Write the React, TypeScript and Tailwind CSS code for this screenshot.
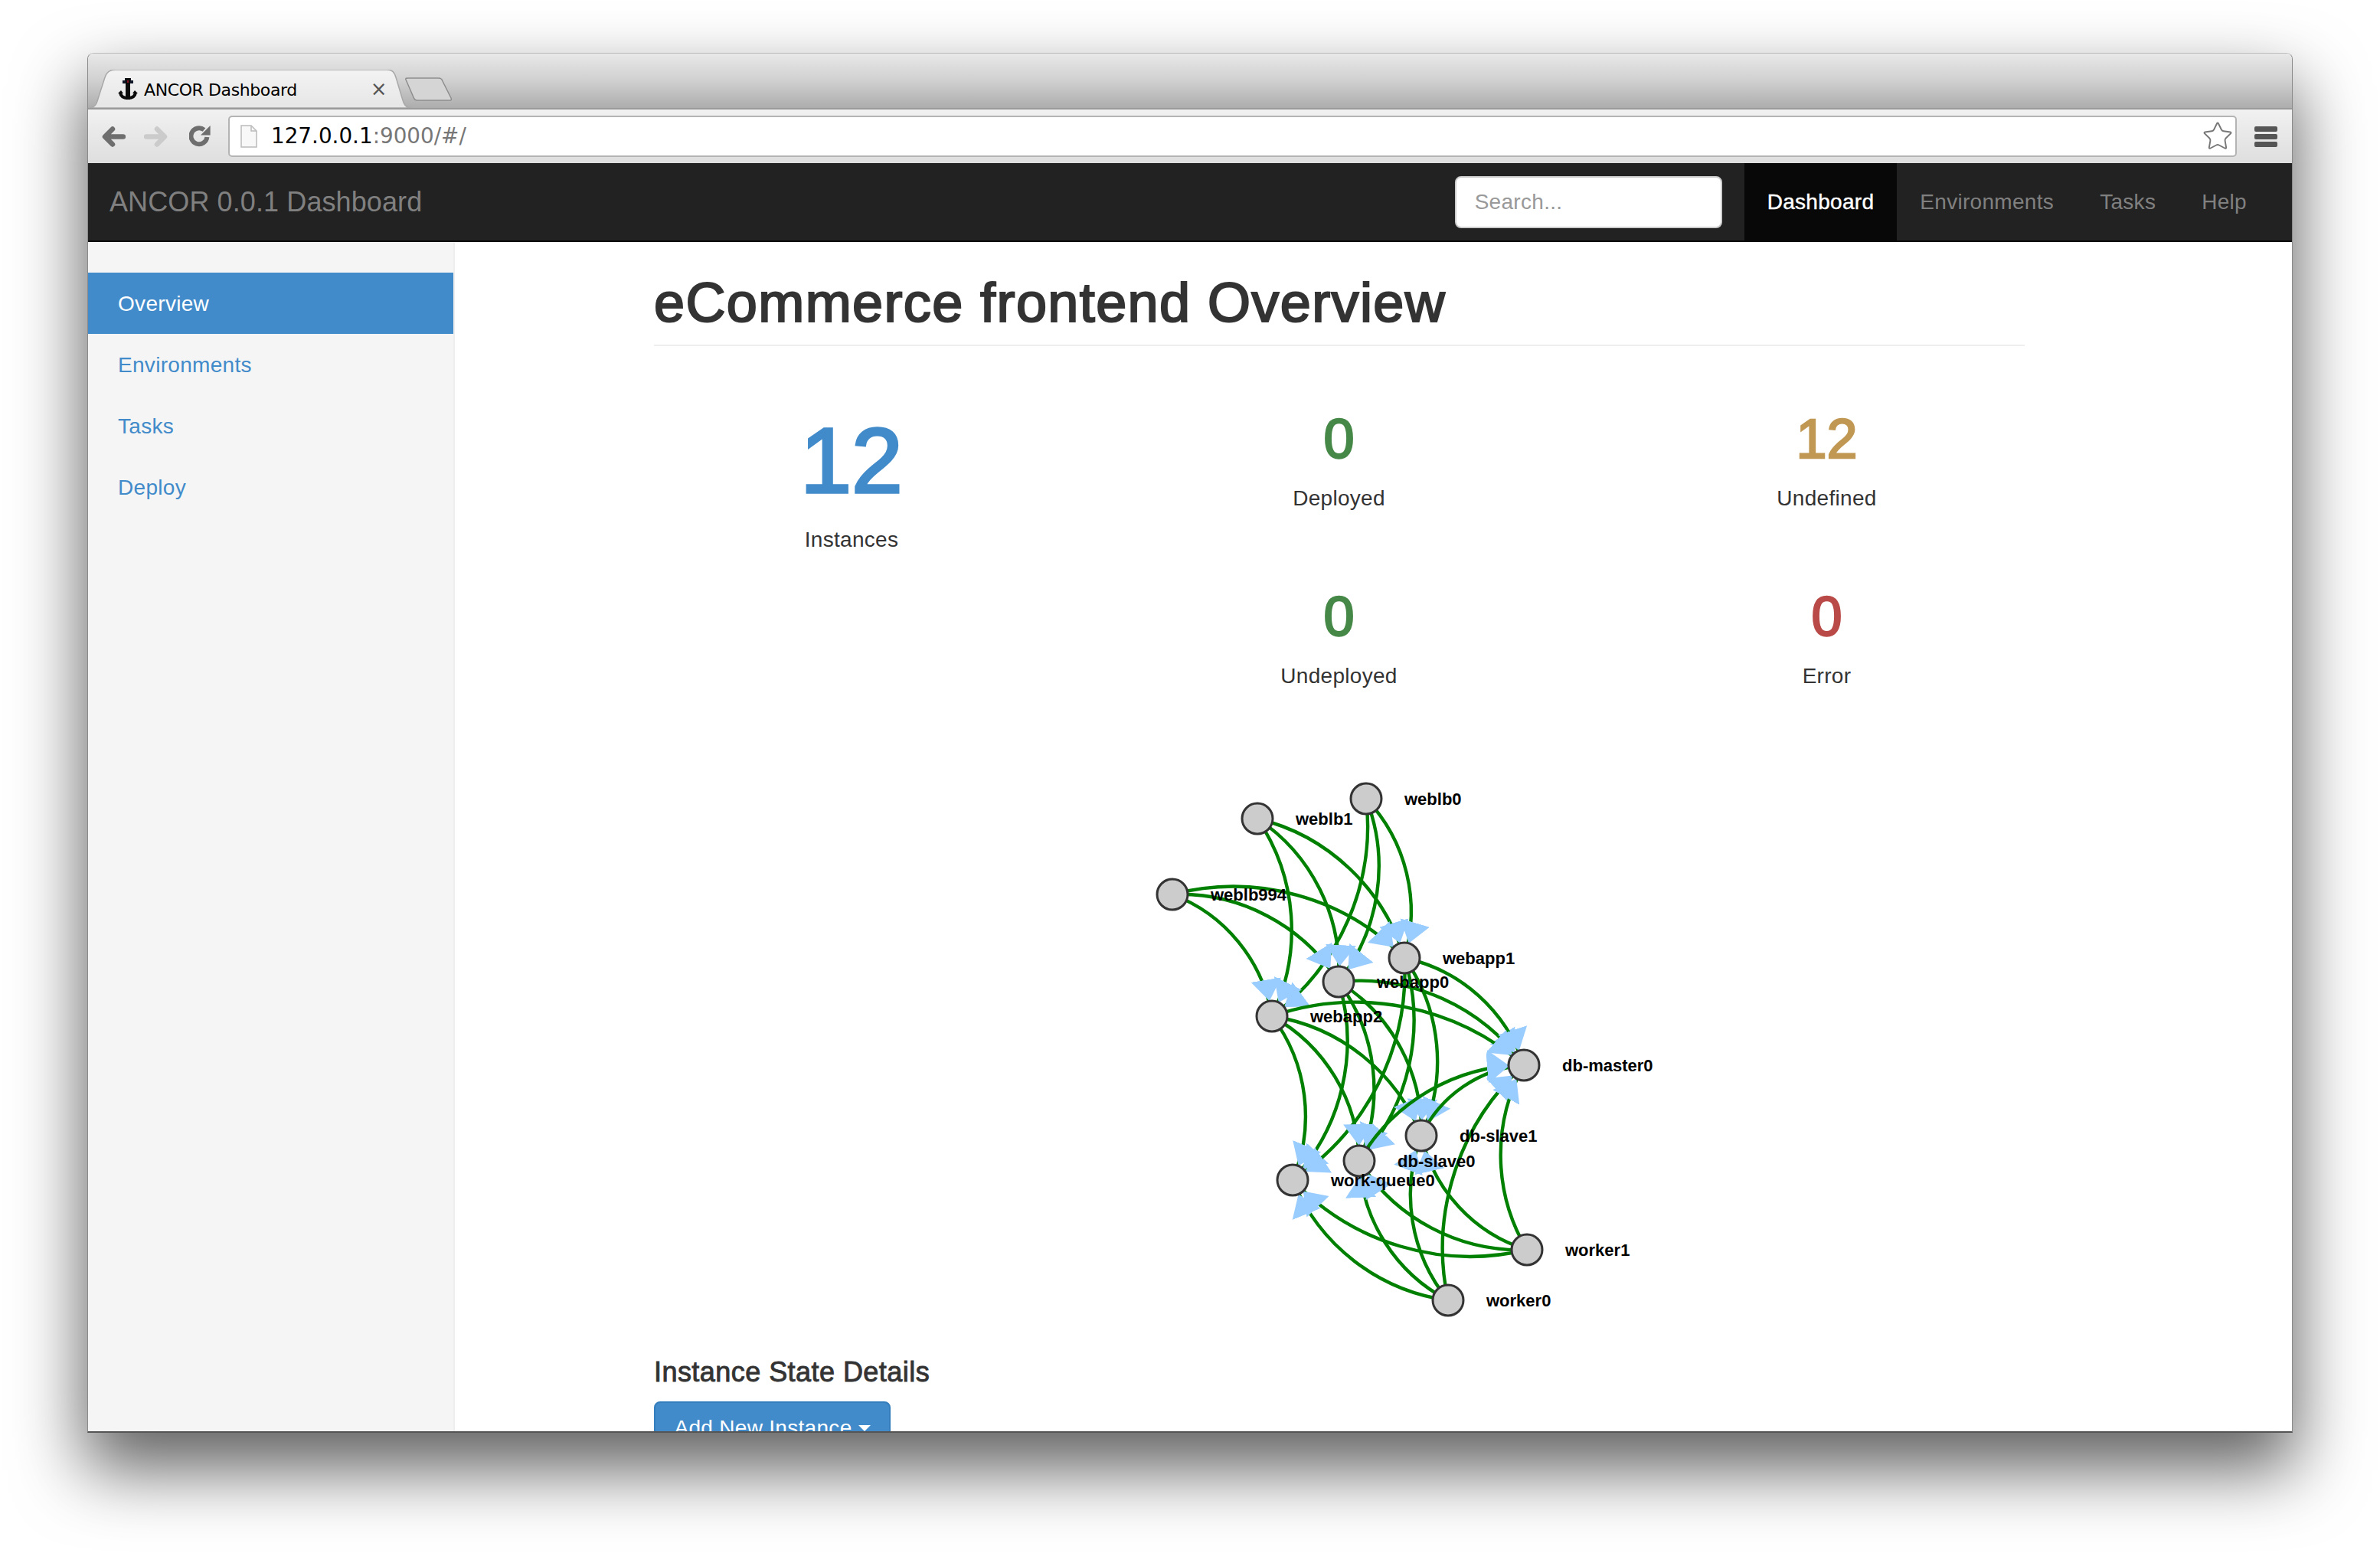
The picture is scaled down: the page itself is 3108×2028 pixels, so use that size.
import { Star } from "lucide-react";

type Pos = { x: number; y: number };

const nodes: Record<string, Pos> = {
  weblb0: { x: 1784, y: 1043 },
  weblb1: { x: 1642, y: 1069 },
  weblb994: { x: 1531, y: 1168 },
  webapp1: { x: 1834, y: 1251 },
  webapp0: { x: 1748, y: 1282 },
  webapp2: { x: 1661, y: 1327 },
  "db-master0": { x: 1990, y: 1391 },
  "db-slave1": { x: 1856, y: 1483 },
  "db-slave0": { x: 1775, y: 1516 },
  "work-queue0": { x: 1688, y: 1541 },
  worker1: { x: 1994, y: 1632 },
  worker0: { x: 1891, y: 1698 },
};

const cross = (from: string[], to: string[]) => from.flatMap((a) => to.map((b) => [a, b]));

const weblbs = ["weblb0", "weblb1", "weblb994"];
const webapps = ["webapp0", "webapp1", "webapp2"];
const backends = ["db-master0", "db-slave0", "db-slave1", "work-queue0"];

const edges = [
  ...cross(weblbs, webapps),
  ...cross(webapps, backends),
  ...cross(["db-slave0", "db-slave1"], ["db-master0"]),
  ...cross(["worker0", "worker1"], backends),
];

const arcPath = (a: Pos, b: Pos) => {
  const dr = Math.hypot(b.x - a.x, b.y - a.y);
  return `M${a.x},${a.y}A${dr},${dr} 0 0,1 ${b.x},${b.y}`;
};

const Graph = () => (
  <svg viewBox="1480 1000 760 740" className="ml-[626px] block h-[740px] w-[760px]">
    <defs>
      <marker id="arrow" viewBox="0 -24 50 48" refX="48" refY="0" markerWidth="50" markerHeight="48" markerUnits="userSpaceOnUse" orient="auto">
        <path d="M0,-20L28,0L0,20Z" fill="#99ccff" />
      </marker>
    </defs>
    {edges.map(([a, b]) => (
      <path key={a + b} d={arcPath(nodes[a], nodes[b])} fill="none" stroke="#008000" strokeWidth="4.4" markerEnd="url(#arrow)" />
    ))}
    {Object.entries(nodes).map(([name, p]) => (
      <g key={name}>
        <circle cx={p.x} cy={p.y} r="20" fill="#cccccc" stroke="#333333" strokeWidth="3" />
        <text x={p.x + 50} y={p.y + 8} fontSize="22" fontWeight="700" fontFamily="'Liberation Sans', sans-serif" fill="#000">
          {name}
        </text>
      </g>
    ))}
  </svg>
);

const Anchor = () => (
  <svg viewBox="0 0 26 28" className="relative ml-[39px] h-[28px] w-[26px]">
    <rect x="9" y="0" width="8" height="4" fill="#101828" />
    <rect x="6" y="3" width="14" height="4" fill="#101828" />
    <rect x="10" y="0" width="6" height="28" fill="#0b0b0b" />
    <rect x="12" y="3" width="2" height="3" fill="#8a1020" />
    <path d="M3 19Q4 26 13 26Q22 26 23 19" fill="none" stroke="#0b0b0b" strokeWidth="4" />
    <path d="M0 20L4 16L7 20ZM19 20L22 16L26 20Z" fill="#0b0b0b" />
  </svg>
);

const NavArrow = ({ flip, color }: { flip?: boolean; color: string }) => (
  <svg viewBox="0 0 31 27" className={`h-[27px] w-[31px] ${flip ? "-scale-x-100" : ""}`}>
    <path d="M28 13.5H5M14 3.5L4 13.5L14 23.5" fill="none" stroke={color} strokeWidth="6.5" strokeLinecap="round" strokeLinejoin="round" />
  </svg>
);

const BrowserChrome = () => (
  <>
    <div className="flex h-[73px] items-end border-b-2 border-[#9a9a9a] bg-gradient-to-b from-[#e8e8e8] via-[#d0d0d0] to-[#adadad]">
      <div className="relative flex h-[50px] w-[422px] items-center">
        <svg viewBox="0 0 422 50" className="absolute inset-0 h-full w-full">
          <defs>
            <linearGradient id="tab" x1="0" y1="0" x2="0" y2="1">
              <stop offset="0" stopColor="#f3f3f3" />
              <stop offset="1" stopColor="#e6e6e6" />
            </linearGradient>
          </defs>
          <path d="M0,50C8,50 11,46 13,38L22,10C24,3 29,0 36,0H390C397,0 400,3 402,10L411,40C413,47 416,50 422,50Z" fill="url(#tab)" stroke="#a8a8a8" strokeWidth="1.5" />
        </svg>
        <Anchor />
        <span className="relative ml-[8px] pt-[3px] font-['DejaVu_Sans',sans-serif] text-[22px] leading-none tracking-[-0.4px] text-black">ANCOR Dashboard</span>
        <span className="relative ml-[96px] font-['DejaVu_Sans',sans-serif] text-[26px] leading-none text-[#555]">×</span>
      </div>
      <svg viewBox="0 0 62 31" className="mb-[9px] -ml-[8px] h-[31px] w-[62px]">
        <path d="M1,3C0,1 2,1 4,1H44C47,1 48,2 49,5L60,27C61,30 60,30 57,30H16C13,30 12,29 11,26Z" fill="#d5d5d5" stroke="#8e8e8e" strokeWidth="1.5" />
      </svg>
    </div>
    <div className="flex h-[70px] items-center bg-gradient-to-b from-[#f1f1f1] to-[#dedede] pl-[18px] pr-[19px]">
      <NavArrow color="#6e6e6e" />
      <div className="ml-[24px]">
        <NavArrow flip color="#cbcbcb" />
      </div>
      <svg viewBox="0 0 28 28" className="ml-[28px] h-[28px] w-[28px]">
        <path d="M23.4 15A10.5 10.5 0 1 1 19.5 5.5" fill="none" stroke="#6e6e6e" strokeWidth="6" />
        <path d="M27.6 0V12.6H15Z" fill="#6e6e6e" />
      </svg>
      <div className="ml-[23px] flex h-[54px] flex-1 items-center rounded-[5px] border-2 border-[#b4b4b4] bg-white pl-[14px] pr-[2px]">
        <svg viewBox="0 0 22 30" className="h-[30px] w-[22px]">
          <path d="M1,1H14L21,8V29H1Z" fill="#f8f8f8" stroke="#bbbbbb" strokeWidth="1.5" />
          <path d="M14,1V8H21" fill="none" stroke="#bbbbbb" strokeWidth="1.5" />
        </svg>
        <span className="ml-[18px] font-['DejaVu_Sans',sans-serif] text-[27.8px] leading-none text-black">
          127.0.0.1<span className="text-[#777]">:9000/#/</span>
        </span>
        <Star size={42} strokeWidth={1.1} className="ml-auto text-[#777]" />
      </div>
      <div className="ml-[23px] flex w-[30px] flex-col gap-[3px]">
        <div className="h-[7px] rounded-[2px] bg-[#555]" />
        <div className="h-[7px] rounded-[2px] bg-[#555]" />
        <div className="h-[7px] rounded-[2px] bg-[#555]" />
      </div>
    </div>
  </>
);

const Navbar = () => (
  <div className="flex h-[103px] border-b-2 border-[#080808] bg-[#222222] pl-[28px] text-[28px] tracking-[0.3px] text-[#808080]">
    <div className="flex items-center pt-[1px] text-[36px] tracking-[0.1px]">ANCOR 0.0.1 Dashboard</div>
    <div className="ml-auto flex items-center">
      <div className="flex h-[68px] w-[349px] items-center rounded-[8px] border-2 border-[#cccccc] bg-white pl-[24px] pt-[1px] text-[#999999]">Search...</div>
    </div>
    <div className="ml-[29px] flex items-center bg-[#080808] px-[30px] pt-[1px] text-white [-webkit-text-stroke-width:0.4px]">Dashboard</div>
    <div className="flex items-center px-[30px] pt-[1px]">Environments</div>
    <div className="flex items-center px-[30px] pt-[1px]">Tasks</div>
    <div className="flex items-center px-[30px] pt-[1px]">Help</div>
    <div className="w-[29px]" />
  </div>
);

const Sidebar = () => (
  <div className="w-[479px] shrink-0 border-r-2 border-[#eeeeee] bg-[#f5f5f5] pt-[40px] text-[28px] tracking-[0.3px] text-[#428bca]">
    <div className="flex h-[80px] items-center bg-[#428bca] pl-[39px] pt-[1px] text-white">Overview</div>
    <div className="flex h-[80px] items-center pl-[39px] pt-[1px]">Environments</div>
    <div className="flex h-[80px] items-center pl-[39px] pt-[1px]">Tasks</div>
    <div className="flex h-[80px] items-center pl-[39px] pt-[1px]">Deploy</div>
  </div>
);

const Stat = ({ value, label, color, top }: { value: string; label: string; color: string; top: string }) => (
  <div className={`text-center ${top}`}>
    <div className={`text-[72px] leading-[80px] [-webkit-text-stroke-width:2.4px] ${color}`}>{value}</div>
    <div className="mt-[18px] text-[28px] leading-[40px] tracking-[0.3px] text-[#333333]">{label}</div>
  </div>
);

export default function App() {
  return (
    <div className="h-[2028px] w-[3108px] overflow-hidden bg-white pl-[114px] pt-[69px] font-['Liberation_Sans',sans-serif]">
      <div className="flex h-[1802px] w-[2880px] flex-col overflow-hidden rounded-t-[8px] border-x border-t border-b-2 border-x-[#8a8a8a] border-t-[#bdbdbd] border-b-[#555555] shadow-[0_44px_90px_4px_rgba(0,0,0,0.62)]">
        <BrowserChrome />
        <Navbar />
        <div className="flex min-h-0 flex-1 bg-white">
          <Sidebar />
          <div className="min-w-0 flex-1 overflow-hidden pl-[260px] pt-[39px]">
            <div className="w-[1790px] border-b-2 border-[#eeeeee] pb-[15px] text-[72px] leading-[80px] tracking-[1.4px] text-[#333333] [-webkit-text-stroke-width:2.2px]">
              eCommerce frontend Overview
            </div>
            <div className="mt-[81px] flex">
              <div className="mt-[2px] w-[516px] text-center">
                <div className="text-[120px] leading-[132px] text-[#428bca] [-webkit-text-stroke-width:3.5px]">12</div>
                <div className="mt-[18px] text-[28px] leading-[40px] tracking-[0.3px] text-[#333333]">Instances</div>
              </div>
              <div className="ml-[60px] grid w-[1274px] grid-cols-2">
                <Stat value="0" label="Deployed" color="text-[#468847]" top="" />
                <Stat value="12" label="Undefined" color="text-[#c09853]" top="" />
                <Stat value="0" label="Undeployed" color="text-[#468847]" top="mt-[94px]" />
                <Stat value="0" label="Error" color="text-[#b94a48]" top="mt-[94px]" />
              </div>
            </div>
            <div className="mt-[97px]">
              <Graph />
            </div>
            <div className="mt-[26px] text-[36px] leading-[52px] tracking-[0.45px] text-[#333333] [-webkit-text-stroke-width:0.9px]">Instance State Details</div>
            <div className="mt-[12px] flex h-[68px] w-[309px] items-center justify-center gap-[8px] rounded-[8px] border-2 border-[#357ebd] bg-[#428bca] pt-[1px] text-[28px] tracking-[0.3px] text-white">
              Add New Instance
              <span className="h-0 w-0 border-x-[8px] border-t-[8px] border-x-transparent border-t-white" />
            </div>
          </div>
        </div>
      </div>
    </div>
  );
}
